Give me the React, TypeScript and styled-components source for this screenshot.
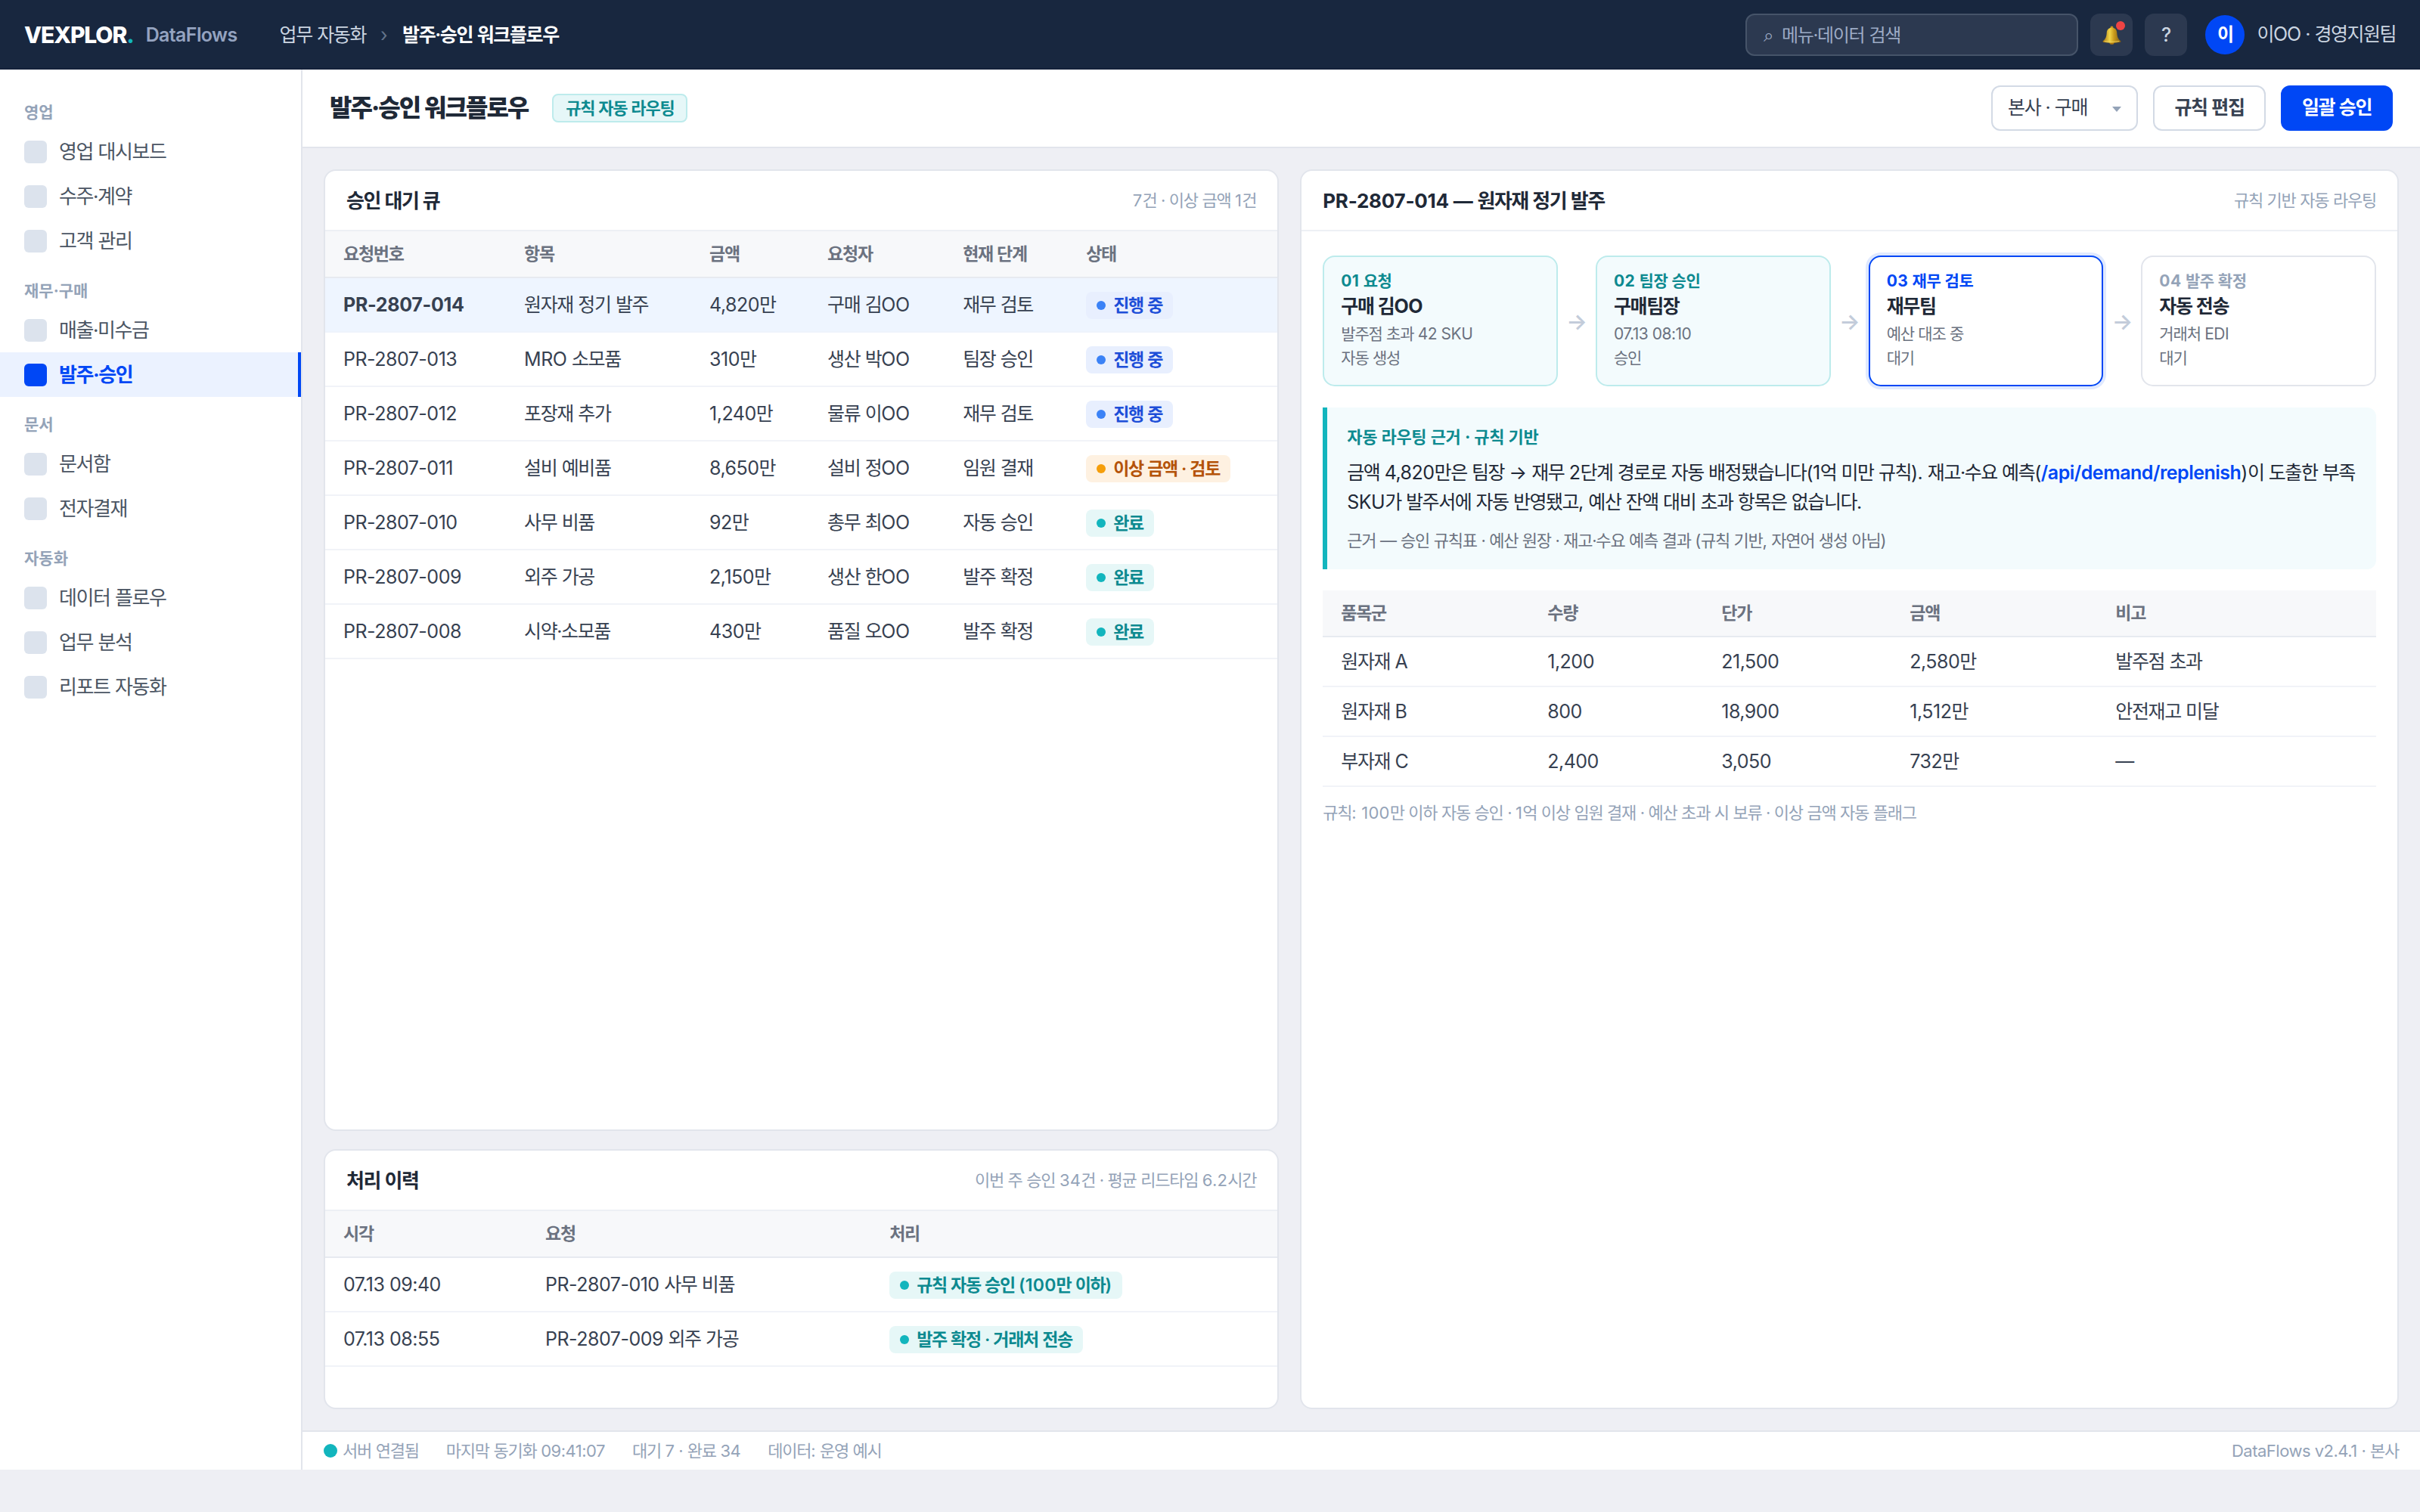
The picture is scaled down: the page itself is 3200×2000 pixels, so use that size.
import type { ReactNode } from 'react';
import styled, { createGlobalStyle, css } from 'styled-components';

const GlobalStyle = createGlobalStyle`
  *, *::before, *::after {
    box-sizing: border-box;
  }

  body {
    margin: 0;
    background: #eeeff4;
    color: #1f2937;
    font-family: Inter, "Noto Sans CJK KR", sans-serif;
    font-size: 25px;
    line-height: 1.5;
    letter-spacing: -0.02em;
    -webkit-font-smoothing: antialiased;
  }
`;

/* ---------- text ---------- */

// Hangul is set a little tighter than the latin text and digits next to it
const Hangul = styled.span`
  letter-spacing: var(--ko-spacing, -0.055em);
  word-spacing: 0.028em;
`;

const ko = (text: string): ReactNode =>
  text
    .split(/([가-힣][가-힣 ·]*)/)
    .map((part, i) => (i % 2 ? <Hangul key={i}>{part}</Hangul> : part));

/* ---------- shell ---------- */

const Shell = styled.div`
  display: flex;
  flex-direction: column;
  width: 3200px;
  height: 1944px;
  white-space: nowrap;
`;

const TopBar = styled.header`
  display: flex;
  align-items: center;
  height: 92px;
  flex: none;
  padding: 2px 32px 0;
  background: #18273f;
  border-bottom: 2px solid #14213a;
  color: #cbd5e1;
`;

const Brand = styled.div`
  padding-top: 1px;
  font-size: 30px;
  font-weight: 800;
  letter-spacing: -0.037em;
  color: #fff;

  i {
    font-style: normal;
    color: #12b5bd;
  }
`;

const Product = styled.div`
  margin-left: 16px;
  padding-top: 1px;
  font-weight: 600;
  letter-spacing: -0.025em;
  color: #94a3c0;
`;

const Crumbs = styled.nav`
  display: flex;
  align-items: center;
  gap: 19px;
  margin-left: 56px;
  padding-top: 1px;

  b {
    font-weight: 600;
    color: #fff;
  }
`;

const CrumbSep = styled.span`
  width: 10px;
  color: #64748b;
`;

const TopTools = styled.div`
  display: flex;
  align-items: center;
  gap: 16px;
  margin-left: auto;
`;

const Search = styled.div`
  display: flex;
  align-items: center;
  gap: 11px;
  width: 440px;
  height: 56px;
  padding: 1px 22px 0;
  border: 2px solid #465469;
  border-radius: 12px;
  background: #2c3950;
  font-size: 24px;
  color: #9dabc5;
`;

const IconButton = styled.button`
  position: relative;
  display: flex;
  align-items: center;
  justify-content: center;
  width: 56px;
  height: 56px;
  padding: 0;
  border: 0;
  border-radius: 12px;
  background: #2c3950;
  font: 500 25px Inter, sans-serif;
  color: #cbd5e1;
`;

const AlertDot = styled.span`
  position: absolute;
  top: 10px;
  right: 10px;
  width: 12px;
  height: 12px;
  border-radius: 50%;
  background: #ef4444;
`;

const User = styled.div`
  --ko-spacing: -0.06em;
  display: flex;
  align-items: center;
  gap: 16px;
  margin-left: 8px;
  letter-spacing: -0.04em;
`;

const Avatar = styled.div`
  display: flex;
  align-items: center;
  justify-content: center;
  width: 52px;
  height: 52px;
  border-radius: 50%;
  background: #0047f5;
  font-size: 24px;
  font-weight: 700;
  color: #fff;
`;

const Body = styled.div`
  display: flex;
  flex: 1;
  min-height: 0;
`;

/* ---------- sidebar ---------- */

const Sidebar = styled.aside`
  width: 400px;
  flex: none;
  padding-top: 20px;
  background: #fff;
  border-right: 2px solid #e2e5ec;
`;

const NavLabel = styled.div`
  --ko-spacing: 0;
  height: 59px;
  padding: 25px 32px 0;
  font-size: 21px;
  font-weight: 700;
  line-height: 24px;
  color: #94a3b8;
`;

const NavItem = styled.div<{ $active?: boolean }>`
  display: flex;
  align-items: center;
  gap: 16px;
  height: 59px;
  padding-left: 32px;
  font-size: 26px;
  color: #4b5563;

  &::before {
    content: '';
    width: 30px;
    height: 30px;
    border-radius: 6px;
    background: #dce3ed;
  }

  ${({ $active }) =>
    $active &&
    css`
      background: #ebf2ff;
      border-right: 4px solid #0047f5;
      font-weight: 700;
      color: #0047f5;

      &::before {
        background: #0047f5;
      }
    `}
`;

/* ---------- main column ---------- */

const Main = styled.main`
  display: flex;
  flex: 1;
  flex-direction: column;
  min-width: 0;
`;

const PageHead = styled.div`
  display: flex;
  align-items: center;
  gap: 20px;
  height: 104px;
  flex: none;
  padding: 0 36px;
  background: #fff;
  border-bottom: 2px solid #e2e5ec;
`;

const PageTitle = styled.h1`
  --ko-spacing: -0.062em;
  margin: 0 12px 0 0;
  font-size: 32px;
  font-weight: 800;
`;

const RuleTag = styled.span`
  display: flex;
  align-items: center;
  height: 38px;
  margin-right: auto;
  padding: 0 16px;
  border: 2px solid #bdebec;
  border-radius: 8px;
  background: #e6f7f8;
  font-size: 22px;
  font-weight: 600;
  color: #0d8a90;
`;

const Select = styled.div`
  display: flex;
  align-items: center;
  justify-content: space-between;
  width: 194px;
  height: 60px;
  padding: 0 20px;
  border: 2px solid #d3dae5;
  border-radius: 12px;
  color: #374151;

  &::after {
    content: '';
    margin-top: 2px;
    border: 6px solid transparent;
    border-top: 7px solid #94a3b8;
    border-bottom: 0;
  }
`;

const Button = styled.button<{ $primary?: boolean }>`
  width: ${({ $primary }) => ($primary ? 148 : 149)}px;
  height: 60px;
  padding: 0;
  border: 2px solid ${({ $primary }) => ($primary ? '#0047f5' : '#d3dae5')};
  border-radius: 12px;
  background: ${({ $primary }) => ($primary ? '#0047f5' : '#fff')};
  font: inherit;
  font-weight: 600;
  color: ${({ $primary }) => ($primary ? '#fff' : '#374151')};
`;

const Board = styled.div`
  display: grid;
  flex: 1;
  grid-template-columns: 1fr 1.15fr;
  gap: 28px;
  min-height: 0;
  padding: 28px;
`;

const Column = styled.div`
  display: flex;
  flex-direction: column;
  gap: 24px;
  min-width: 0;
`;

const Card = styled.section<{ $height?: number }>`
  ${({ $height }) => ($height ? `height: ${$height}px;` : 'flex: 1;')}
  overflow: hidden;
  border: 2px solid #e2e5ec;
  border-radius: 16px;
  background: #fff;
`;

const CardHead = styled.div`
  display: flex;
  align-items: center;
  justify-content: space-between;
  height: 80px;
  padding: 0 28px;
  border-bottom: 2px solid #edf0f5;
`;

const CardTitle = styled.h2`
  margin: 0;
  font-size: 26px;
  font-weight: 700;
  letter-spacing: -0.01em;
`;

const CardMeta = styled.span`
  font-size: 22px;
  letter-spacing: 0.01em;
  color: #94a3b8;
`;

/* ---------- tables ---------- */

const Table = styled.table<{ $rowHeight?: number }>`
  width: 100%;
  table-layout: fixed;
  border-collapse: separate;
  border-spacing: 0;

  th,
  td {
    padding: 0 0 0 24px;
    text-align: left;
    vertical-align: middle;
  }

  th {
    height: 62px;
    background: #f7f8fa;
    border-bottom: 2px solid #e7eaf0;
    font-size: 23px;
    font-weight: 600;
    color: #6b7280;
  }

  td {
    height: ${({ $rowHeight = 72 }) => $rowHeight}px;
    padding-top: 2px;
    border-bottom: 2px solid #f1f3f8;
    color: #374151;
  }
`;

const Row = styled.tr<{ $selected?: boolean }>`
  ${({ $selected }) =>
    $selected &&
    css`
      td {
        background: #eef5ff;
        border-bottom-color: #eef3fc;
      }

      td:first-child {
        font-weight: 700;
        letter-spacing: -0.012em;
      }
    `}
`;

type Tone = 'progress' | 'warn' | 'done';

const tones: Record<Tone, { bg: string; dot: string; text: string }> = {
  progress: { bg: '#e8effe', dot: '#3b82f6', text: '#1d4ed8' },
  warn: { bg: '#fef1e1', dot: '#f59e0b', text: '#b45309' },
  done: { bg: '#e6f7f7', dot: '#12b5bd', text: '#0d8a90' },
};

const Status = styled.div<{ $tone: Tone }>`
  display: flex;
  align-items: center;
  width: fit-content;
  height: 36px;
  padding: 0 14px;
  border-radius: 8px;
  background: ${({ $tone }) => tones[$tone].bg};
  font-size: 23px;
  font-weight: 600;
  letter-spacing: 0.01em;
  color: ${({ $tone }) => tones[$tone].text};

  &::before {
    content: '';
    width: 12px;
    height: 12px;
    margin-right: 10px;
    border-radius: 50%;
    background: ${({ $tone }) => tones[$tone].dot};
  }
`;

/* ---------- request detail ---------- */

const Detail = styled.div`
  display: flex;
  flex-direction: column;
  gap: 28px;
  padding: 32px 28px;
`;

const Steps = styled.div`
  display: flex;
  align-items: center;
`;

type StepState = 'done' | 'active' | 'todo';

const Step = styled.div<{ $state: StepState }>`
  flex: 1;
  height: 173px;
  padding: 20px 22px;
  border: 2px solid #e2e5ec;
  border-radius: 16px;
  background: #fff;

  ${({ $state }) =>
    $state === 'done' &&
    css`
      border-color: #bdebec;
      background: #f3fbfd;
    `}

  ${({ $state }) =>
    $state === 'active' &&
    css`
      border-color: #0047f5;
      box-shadow: 0 0 0 4px #e0e9fe;
    `}
`;

const stepColors: Record<StepState, string> = {
  done: '#0d8a90',
  active: '#0047f5',
  todo: '#94a3b8',
};

const StepLabel = styled.div<{ $state: StepState }>`
  --ko-spacing: -0.02em;
  font-size: 21px;
  font-weight: 700;
  line-height: 24px;
  letter-spacing: 0.02em;
  color: ${({ $state }) => stepColors[$state]};
`;

const StepOwner = styled.div`
  margin: 6px 0;
  font-weight: 700;
  line-height: 30px;
`;

const StepNote = styled.div`
  font-size: 21px;
  line-height: 31.5px;
  color: #6b7280;
`;

const StepArrow = styled.div`
  width: 50px;
  padding-top: 2px;
  text-align: center;
  font-size: 29px;
  font-weight: 600;
  color: #c3ccda;
`;

const Reason = styled.div`
  height: 214px;
  padding: 24px 0 0 26px;
  border-left: 6px solid #12b5bd;
  border-radius: 0 12px 12px 0;
  background: #f3fbfd;
`;

const ReasonTitle = styled.div`
  --ko-spacing: -0.016em;
  font-size: 22px;
  font-weight: 700;
  line-height: 31px;
  color: #0d8a90;
`;

const ReasonText = styled.p`
  --ko-spacing: -0.058em;
  margin: 12px 0 17px;
  line-height: 38.75px;

  b {
    font-weight: 600;
    letter-spacing: -0.02em;
    color: #0047f5;
  }
`;

const ReasonSource = styled.div`
  font-size: 22px;
  line-height: 28px;
  color: #6b7280;
`;

const RuleNote = styled.div`
  margin-top: -10px;
  font-size: 22px;
  line-height: 32px;
  letter-spacing: 0.01em;
  color: #94a3b8;
`;

/* ---------- status bar ---------- */

const StatusBar = styled.footer`
  display: flex;
  align-items: center;
  gap: 36px;
  height: 52px;
  flex: none;
  padding: 0 28px;
  background: #fff;
  border-top: 2px solid #e2e5ec;
  font-size: 22px;
  color: #94a3b8;
`;

const Online = styled.div`
  display: flex;
  align-items: center;
  gap: 7px;

  &::before {
    content: '';
    width: 18px;
    height: 18px;
    border-radius: 50%;
    background: #12b5bd;
  }
`;

const StatusText = styled.div<{ $end?: boolean }>`
  margin-left: ${({ $end }) => ($end ? 'auto' : '0')};
`;

/* ---------- icons ---------- */

const BellIcon = () => (
  <svg width="25" height="25" viewBox="0 0 24 24">
    <defs>
      <linearGradient id="bell" x1="0" x2="1">
        <stop offset="0" stopColor="#a06f0e" />
        <stop offset="0.38" stopColor="#f3d548" />
        <stop offset="0.62" stopColor="#c99a1c" />
        <stop offset="1" stopColor="#7d5810" />
      </linearGradient>
    </defs>
    <circle cx="12" cy="2.4" r="1.9" fill="#c9951a" />
    <ellipse cx="12" cy="21.6" rx="3" ry="2.2" fill="#a87412" />
    <path
      d="M12 2.6c-4 0-6.2 2.4-6.5 6.2-.3 4.4-.8 7.4-4.6 10.4-.8.8-.3 1.7.7 1.9 6.6 1 14.2 1 20.8 0 1-.2 1.5-1.1.7-1.9-3.8-3-4.3-6-4.6-10.4C18.2 5 16 2.6 12 2.6z"
      fill="url(#bell)"
    />
    <path d="M2.5 19.6c6 1 13 1 19 0" fill="none" stroke="#f2d563" strokeWidth="0.8" />
  </svg>
);

/* ---------- data ---------- */

const menu = [
  { label: '영업', items: ['영업 대시보드', '수주·계약', '고객 관리'] },
  { label: '재무·구매', items: ['매출·미수금', '발주·승인'] },
  { label: '문서', items: ['문서함', '전자결재'] },
  { label: '자동화', items: ['데이터 플로우', '업무 분석', '리포트 자동화'] },
];

const queue: { cells: string[]; tone: Tone; status: string }[] = [
  { cells: ['PR-2807-014', '원자재 정기 발주', '4,820만', '구매 김OO', '재무 검토'], tone: 'progress', status: '진행 중' },
  { cells: ['PR-2807-013', 'MRO 소모품', '310만', '생산 박OO', '팀장 승인'], tone: 'progress', status: '진행 중' },
  { cells: ['PR-2807-012', '포장재 추가', '1,240만', '물류 이OO', '재무 검토'], tone: 'progress', status: '진행 중' },
  { cells: ['PR-2807-011', '설비 예비품', '8,650만', '설비 정OO', '임원 결재'], tone: 'warn', status: '이상 금액 · 검토' },
  { cells: ['PR-2807-010', '사무 비품', '92만', '총무 최OO', '자동 승인'], tone: 'done', status: '완료' },
  { cells: ['PR-2807-009', '외주 가공', '2,150만', '생산 한OO', '발주 확정'], tone: 'done', status: '완료' },
  { cells: ['PR-2807-008', '시약·소모품', '430만', '품질 오OO', '발주 확정'], tone: 'done', status: '완료' },
];

const history = [
  { time: '07.13 09:40', request: 'PR-2807-010 사무 비품', result: '규칙 자동 승인 (100만 이하)' },
  { time: '07.13 08:55', request: 'PR-2807-009 외주 가공', result: '발주 확정 · 거래처 전송' },
];

const steps: { label: string; owner: string; notes: string[]; state: StepState }[] = [
  { label: '01 요청', owner: '구매 김OO', notes: ['발주점 초과 42 SKU', '자동 생성'], state: 'done' },
  { label: '02 팀장 승인', owner: '구매팀장', notes: ['07.13 08:10', '승인'], state: 'done' },
  { label: '03 재무 검토', owner: '재무팀', notes: ['예산 대조 중', '대기'], state: 'active' },
  { label: '04 발주 확정', owner: '자동 전송', notes: ['거래처 EDI', '대기'], state: 'todo' },
];

const lines = [
  ['원자재 A', '1,200', '21,500', '2,580만', '발주점 초과'],
  ['원자재 B', '800', '18,900', '1,512만', '안전재고 미달'],
  ['부자재 C', '2,400', '3,050', '732만', '—'],
];

const Head = ({ names, widths }: { names: string[]; widths: number[] }) => (
  <>
    <colgroup>
      {names.map((name, i) => (
        <col key={name} width={widths[i]} />
      ))}
    </colgroup>
    <thead>
      <tr>
        {names.map((name) => (
          <th key={name}>{ko(name)}</th>
        ))}
      </tr>
    </thead>
  </>
);

export default function App() {
  return (
    <>
      <GlobalStyle />
      <Shell>
        <TopBar>
          <Brand>
            VEXPLOR<i>.</i>
          </Brand>
          <Product>DataFlows</Product>
          <Crumbs>
            <span>{ko('업무 자동화')}</span>
            <CrumbSep>›</CrumbSep>
            <b>{ko('발주·승인 워크플로우')}</b>
          </Crumbs>
          <TopTools>
            <Search>
              <span>⌕</span>
              <span>{ko('메뉴·데이터 검색')}</span>
            </Search>
            <IconButton>
              <BellIcon />
              <AlertDot />
            </IconButton>
            <IconButton>?</IconButton>
            <User>
              <Avatar>이</Avatar>
              <span>{ko('이OO · 경영지원팀')}</span>
            </User>
          </TopTools>
        </TopBar>

        <Body>
          <Sidebar>
            {menu.map((group) => (
              <div key={group.label}>
                <NavLabel>{ko(group.label)}</NavLabel>
                {group.items.map((item) => (
                  <NavItem key={item} $active={item === '발주·승인'}>
                    <span>{ko(item)}</span>
                  </NavItem>
                ))}
              </div>
            ))}
          </Sidebar>

          <Main>
            <PageHead>
              <PageTitle>{ko('발주·승인 워크플로우')}</PageTitle>
              <RuleTag>{ko('규칙 자동 라우팅')}</RuleTag>
              <Select>
                <span>{ko('본사 · 구매')}</span>
              </Select>
              <Button>{ko('규칙 편집')}</Button>
              <Button $primary>{ko('일괄 승인')}</Button>
            </PageHead>

            <Board>
              <Column>
                <Card>
                  <CardHead>
                    <CardTitle>{ko('승인 대기 큐')}</CardTitle>
                    <CardMeta>{ko('7건 · 이상 금액 1건')}</CardMeta>
                  </CardHead>
                  <Table>
                    <Head
                      names={['요청번호', '항목', '금액', '요청자', '현재 단계', '상태']}
                      widths={[239, 245, 156, 179, 163, 277]}
                    />
                    <tbody>
                      {queue.map(({ cells, tone, status }, i) => (
                        <Row key={cells[0]} $selected={i === 0}>
                          {cells.map((cell) => (
                            <td key={cell}>{ko(cell)}</td>
                          ))}
                          <td>
                            <Status $tone={tone}>
                              <span>{ko(status)}</span>
                            </Status>
                          </td>
                        </Row>
                      ))}
                    </tbody>
                  </Table>
                </Card>

                <Card $height={344}>
                  <CardHead>
                    <CardTitle>{ko('처리 이력')}</CardTitle>
                    <CardMeta>{ko('이번 주 승인 34건 · 평균 리드타임 6.2시간')}</CardMeta>
                  </CardHead>
                  <Table>
                    <Head names={['시각', '요청', '처리']} widths={[267, 455, 537]} />
                    <tbody>
                      {history.map(({ time, request, result }) => (
                        <Row key={time}>
                          <td>{time}</td>
                          <td>{ko(request)}</td>
                          <td>
                            <Status $tone="done">
                              <span>{ko(result)}</span>
                            </Status>
                          </td>
                        </Row>
                      ))}
                    </tbody>
                  </Table>
                </Card>
              </Column>

              <Column>
                <Card>
                  <CardHead>
                    <CardTitle>{ko('PR-2807-014 — 원자재 정기 발주')}</CardTitle>
                    <CardMeta>{ko('규칙 기반 자동 라우팅')}</CardMeta>
                  </CardHead>
                  <Detail>
                    <Steps>
                      {steps.flatMap(({ label, owner, notes, state }, i) => [
                        i > 0 && <StepArrow key={`${label}-arrow`}>→</StepArrow>,
                        <Step key={label} $state={state}>
                          <StepLabel $state={state}>{ko(label)}</StepLabel>
                          <StepOwner>{ko(owner)}</StepOwner>
                          {notes.map((note) => (
                            <StepNote key={note}>{ko(note)}</StepNote>
                          ))}
                        </Step>,
                      ])}
                    </Steps>

                    <Reason>
                      <ReasonTitle>{ko('자동 라우팅 근거 · 규칙 기반')}</ReasonTitle>
                      <ReasonText>
                        {ko('금액 4,820만은 팀장 → 재무 2단계 경로로 자동 배정됐습니다(1억 미만 규칙). 재고·수요 예측(')}
                        <b>/api/demand/replenish</b>
                        {ko(')이 도출한 부족')}
                        <br />
                        {ko('SKU가 발주서에 자동 반영됐고, 예산 잔액 대비 초과 항목은 없습니다.')}
                      </ReasonText>
                      <ReasonSource>
                        {ko('근거 — 승인 규칙표 · 예산 원장 · 재고·수요 예측 결과 (규칙 기반, 자연어 생성 아님)')}
                      </ReasonSource>
                    </Reason>

                    <Table $rowHeight={66}>
                      <Head
                        names={['품목군', '수량', '단가', '금액', '비고']}
                        widths={[273, 230, 249, 272, 369]}
                      />
                      <tbody>
                        {lines.map((cells) => (
                          <Row key={cells[0]}>
                            {cells.map((cell) => (
                              <td key={cell}>{ko(cell)}</td>
                            ))}
                          </Row>
                        ))}
                      </tbody>
                    </Table>

                    <RuleNote>
                      {ko('규칙: 100만 이하 자동 승인 · 1억 이상 임원 결재 · 예산 초과 시 보류 · 이상 금액 자동 플래그')}
                    </RuleNote>
                  </Detail>
                </Card>
              </Column>
            </Board>

            <StatusBar>
              <Online>
                <div>{ko('서버 연결됨')}</div>
              </Online>
              <StatusText>{ko('마지막 동기화 09:41:07')}</StatusText>
              <StatusText>{ko('대기 7 · 완료 34')}</StatusText>
              <StatusText>{ko('데이터: 운영 예시')}</StatusText>
              <StatusText $end>{ko('DataFlows v2.4.1 · 본사')}</StatusText>
            </StatusBar>
          </Main>
        </Body>
      </Shell>
    </>
  );
}
